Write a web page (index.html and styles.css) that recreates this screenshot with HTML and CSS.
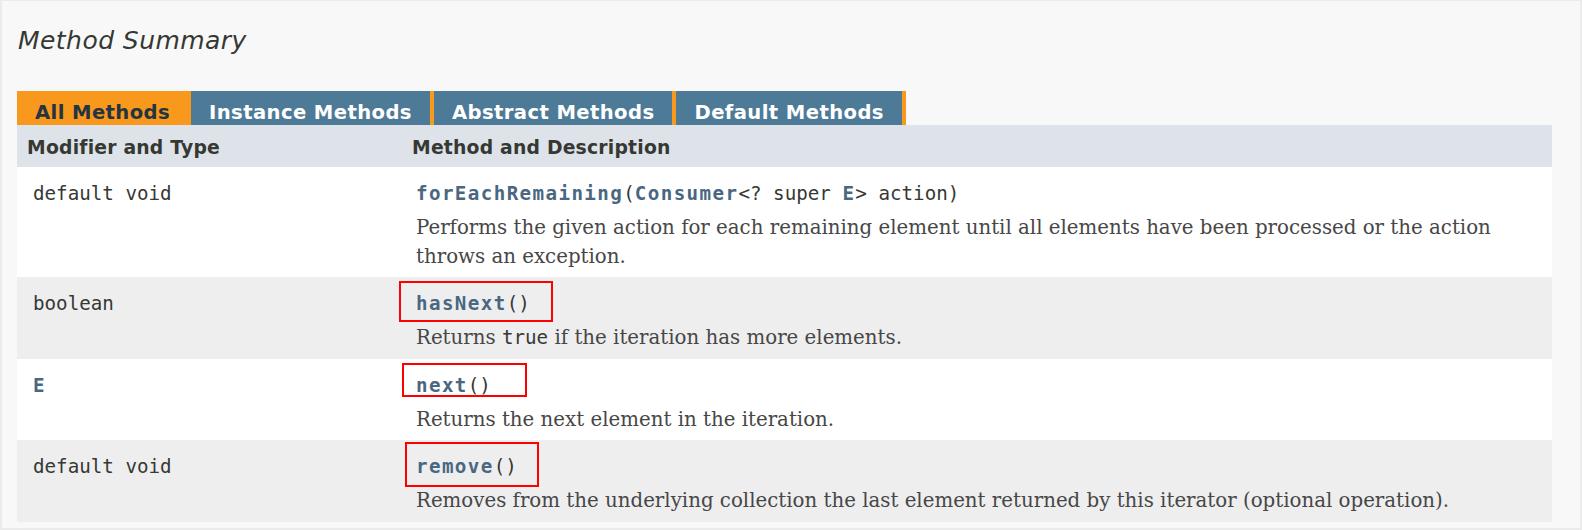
FILE: index.html
```html
<!DOCTYPE html>
<html>
<head>
<meta charset="utf-8">
<link rel="stylesheet" href="styles.css">
</head>
<body>
<div class="page">
  <h3 class="title">Method Summary</h3>
  <div class="tabs">
    <span class="tab active">All Methods</span>
    <span class="tab">Instance Methods</span>
    <span class="tab">Abstract Methods</span>
    <span class="tab">Default Methods</span>
  </div>
  <table class="summary">
    <thead>
      <tr><th class="col-first">Modifier and Type</th><th class="col-last">Method and Description</th></tr>
    </thead>
    <tbody>
      <tr class="alt">
        <td class="col-first"><code>default void</code></td>
        <td class="col-last">
          <div class="sig"><code><a class="link">forEachRemaining</a>(<a class="link">Consumer</a>&lt;? super <a class="link">E</a>&gt; action)</code></div>
          <div class="block">Performs the given action for each remaining element until all elements have been processed or the action throws an exception.</div>
        </td>
      </tr>
      <tr class="row">
        <td class="col-first"><code>boolean</code></td>
        <td class="col-last">
          <div class="sig"><code><a class="link">hasNext</a>()</code></div>
          <div class="block">Returns <code>true</code> if the iteration has more elements.</div>
        </td>
      </tr>
      <tr class="alt">
        <td class="col-first"><code><a class="link">E</a></code></td>
        <td class="col-last">
          <div class="sig"><code><a class="link">next</a>()</code></div>
          <div class="block">Returns the next element in the iteration.</div>
        </td>
      </tr>
      <tr class="row">
        <td class="col-first"><code>default void</code></td>
        <td class="col-last">
          <div class="sig"><code><a class="link">remove</a>()</code></div>
          <div class="block">Removes from the underlying collection the last element returned by this iterator (optional operation).</div>
        </td>
      </tr>
    </tbody>
  </table>
  <div class="mark mark-hasnext"></div>
  <div class="mark mark-next"></div>
  <div class="mark mark-remove"></div>
</div>
</body>
</html>
```
FILE: styles.css
```css
html, body {
  margin: 0;
  padding: 0;
  background: #ffffff;
}

.page {
  position: relative;
  box-sizing: border-box;
  width: 1582px;
  height: 530px;
  background: #f8f8f8;
  border: 1px solid #ebebeb;
  border-width: 1px 2px 2px 2px;
  padding: 0 29px 0 15px;
  font-family: "DejaVu Sans", sans-serif;
  color: #353833;
}

.title {
  margin: 25px 0 0 1px;
  height: 30px;
  line-height: 30px;
  font-size: 25px;
  font-style: italic;
  font-weight: normal;
  letter-spacing: 0.45px;
  color: #353833;
}

.tabs {
  display: flex;
  margin-top: 35px;
  height: 34px;
}

.tab {
  box-sizing: border-box;
  height: 34px;
  padding: 9px 18px 0 18px;
  line-height: 25px;
  font-size: 19.6px;
  font-weight: bold;
  letter-spacing: 0.4px;
  white-space: pre;
  background: #4d7a97;
  color: #ffffff;
  border-right: 4px solid #f8981d;
}

.tab.active {
  background: #f8981d;
  color: #253441;
  padding-left: 18px;
  padding-right: 21px;
  border-right: 0;
}

.summary {
  width: 1535px;
  border-collapse: collapse;
  border-spacing: 0;
  table-layout: fixed;
}

.summary th {
  background: #dee3e9;
  text-align: left;
  font-size: 18.8px;
  font-weight: bold;
  letter-spacing: 0.2px;
  color: #353833;
  height: 42px;
  box-sizing: border-box;
  padding: 10px 10px 5px 10px;
  line-height: 26px;
  vertical-align: top;
}

.summary th.col-first {
  width: 385px;
}

.summary td {
  vertical-align: top;
  padding: 13px 16px 6px 16px;
}

.summary td.col-last {
  padding-left: 14px;
}

.summary tr.alt td {
  background: #ffffff;
}

.summary tr.row td {
  background: #eeeeef;
}

code {
  font-family: "DejaVu Sans Mono", monospace;
  font-size: 19.2px;
}

.col-first code {
  display: block;
  line-height: 28px;
  color: #353833;
}

.sig {
  line-height: 28px;
  color: #353833;
}

.link {
  color: #4a6782;
  font-weight: bold;
  letter-spacing: 1.4px;
  text-decoration: none;
}

.block {
  margin-top: 5px;
  font-family: "DejaVu Serif", serif;
  font-size: 19.8px;
  line-height: 28.5px;
  color: #474747;
}

.block code {
  font-size: 19.2px;
  color: #353833;
}

.mark {
  position: absolute;
  box-sizing: border-box;
  border: 2px solid #ff0000;
}

.mark-hasnext {
  left: 397px;
  top: 280px;
  width: 154px;
  height: 41px;
}

.mark-next {
  left: 400px;
  top: 362px;
  width: 125px;
  height: 34px;
}

.mark-remove {
  left: 403px;
  top: 441px;
  width: 134px;
  height: 45px;
}
```
